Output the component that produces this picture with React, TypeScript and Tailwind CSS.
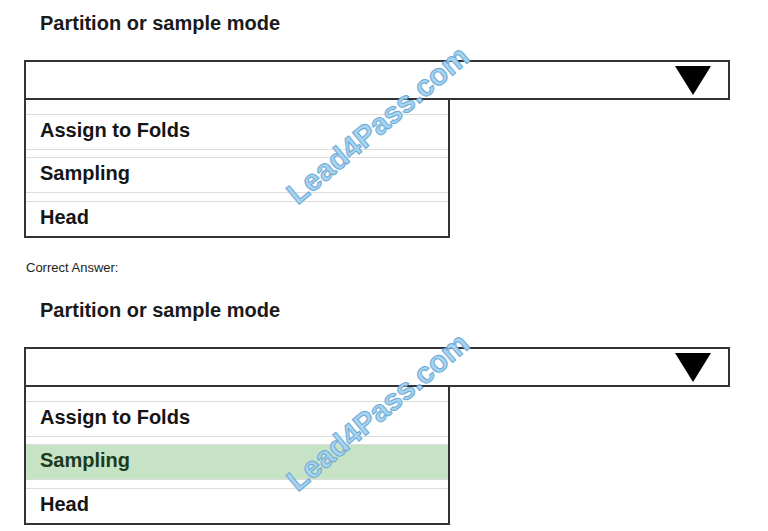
import React from "react";

const FONT = { fontFamily: '"Liberation Sans", Arial, sans-serif' };

function Watermark() {
  return (
    <div className="pointer-events-none absolute left-[378px] top-[125px] -translate-x-1/2 -translate-y-1/2 -rotate-[40deg] whitespace-nowrap text-[30px] font-bold leading-none text-[#a8d3ee] [-webkit-text-stroke:1px_#6aaad8]">
      Lead4Pass.com
    </div>
  );
}

function Row({ label, first, last, selected }: { label: string; first?: boolean; last?: boolean; selected?: boolean }) {
  return (
    <div
      className={
        (last ? "h-[35px] border-t " : "h-[36px] border-y ") +
        (first ? "" : "") +
        "border-[#dcdcdc] pl-[14px] pt-[4px] text-[20px] font-bold leading-[23px] " +
        (selected ? "bg-[#c7e3c5] text-[#1c3a1c]" : "text-[#151515]")
      }
    >
      {label}
    </div>
  );
}

function Section({ answer }: { answer?: boolean }) {
  return (
    <div className="relative">
      <div className="pl-[40px] pt-[12px] text-[20px] font-bold leading-[23px] text-[#1a1a1a]">
        Partition or sample mode
      </div>
      <div className="ml-[24px] mt-[25px] flex h-[40px] w-[706px] items-center justify-end border-2 border-[#333] pr-[17px]">
        <svg width="36" height="29" viewBox="0 0 36 29">
          <polygon points="0,0 36,0 18,29" fill="#000" />
        </svg>
      </div>
      <div className="ml-[24px] w-[426px] border-2 border-t-0 border-[#333] pt-[14px]">
        <Row label="Assign to Folds" first />
        <div className="h-[7px]" />
        <Row label="Sampling" selected={answer} />
        <div className="h-[8px]" />
        <Row label="Head" last />
      </div>
      <Watermark />
    </div>
  );
}

export default function App() {
  return (
    <div className="h-[531px] w-[768px] overflow-hidden bg-white" style={FONT}>
      <Section />
      <div className="mt-[22px] pl-[26px] text-[13px] leading-[15px] text-[#222]">Correct Answer:</div>
      <div className="mt-[12px]">
        <Section answer />
      </div>
    </div>
  );
}
